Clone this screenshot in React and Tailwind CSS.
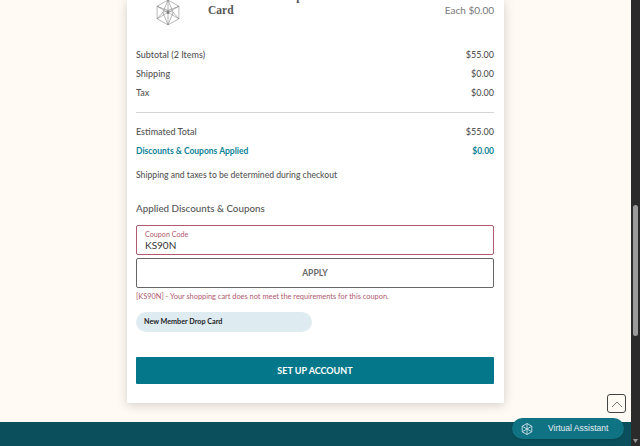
const Row = ({ label, value, className = 'text-[#555] font-medium text-[9px]' }) => (
  <div className={`flex justify-between items-center h-[19px] ${className}`}>
    <span>{label}</span>
    <span>{value}</span>
  </div>
);

const Logo = () => (
  <svg width="28" height="27" viewBox="0 0 26 26" fill="none" stroke="#777" strokeWidth="0.5">
    <path d="M13 1 L23.5 7 V19 L13 25 L2.5 19 V7 Z" />
    <path d="M13 1 V25 M2.5 7 L23.5 19 M23.5 7 L2.5 19" />
    <path d="M13 1 L18 13 L13 25 L8 13 Z" />
    <path d="M2.5 7 L18 13 L23.5 19 M23.5 7 L8 13 L2.5 19" />
    <circle cx="13" cy="13" r="1" fill="#666" />
  </svg>
);

const App = () => (
  <div className="flex w-[640px] h-[446px] overflow-hidden bg-[#fffaf4] font-[Lato,sans-serif]">
    <div className="flex flex-col flex-1 min-w-0">
      <div className="flex-1 min-h-0 flex justify-center">
        <div className="w-[377px] h-[403px] bg-white shadow-[0_2px_10px_rgba(0,0,0,0.18)] pl-[9px] pr-[10px] flex flex-col">
          <div className="flex justify-between items-start h-[45px]">
            <div className="flex gap-[26px]">
              <div className="pl-[18px] -mt-[1px] shrink-0"><Logo /></div>
              <span className="w-[110px] -mt-[11px] text-[11.5px] leading-[14px] font-bold text-[#555] font-['Liberation_Serif',serif]">New Member Drop Card</span>
            </div>
            <span className="text-[10px] text-[#777] mt-[3px]">Each $0.00</span>
          </div>
          <Row label="Subtotal (2 Items)" value="$55.00" />
          <Row label="Shipping" value="$0.00" />
          <Row label="Tax" value="$0.00" />
          <div className="h-px bg-[#d4d4d4] mt-[10px] mb-[9px]" />
          <Row label="Estimated Total" value="$55.00" />
          <Row label="Discounts & Coupons Applied" value="$0.00" className="mt-[1px] text-[#0a8296] font-bold text-[8.5px]" />
          <p className="text-[8.6px] font-medium text-[#555] mt-[8px]">Shipping and taxes to be determined during checkout</p>
          <h3 className="text-[9.8px] font-medium text-[#555] mt-[19px]">Applied Discounts & Coupons</h3>
          <div className="mt-[9.5px] h-[30px] border border-[#b0596f] rounded-[2px] px-[8px] flex flex-col justify-center">
            <span className="text-[7.2px] leading-[9px] text-[#b0596f]">Coupon Code</span>
            <span className="text-[10px] leading-[12px] text-[#333]">KS90N</span>
          </div>
          <button className="mt-[3px] h-[30px] border border-[#666] rounded-[2px] text-[8.5px] font-bold text-[#666]">APPLY</button>
          <p className="text-[7.4px] text-[#b0596f] mt-[2.5px]">[KS90N] - Your shopping cart does not meet the requirements for this coupon.</p>
          <div className="mt-[10.5px] w-[176px] h-[20px] rounded-full bg-[#deecf2] px-[8px] flex items-center text-[7.2px] font-bold text-[#222]">New Member Drop Card</div>
          <button className="mt-[25px] h-[27px] rounded-[1px] bg-[#04788a] text-white text-[9px] font-bold">SET UP ACCOUNT</button>
        </div>
      </div>
      <div className="h-[24px] bg-[#0b4f5c] shrink-0" />
    </div>
    <div className="w-[9px] bg-[#2b2b2b] shrink-0 flex flex-col items-center relative">
      <div className="w-[5px] h-[131px] mt-[205px] bg-[#9b9b9b] rounded-full" />
      <svg className="absolute bottom-[3px] left-[2px]" width="5" height="4" viewBox="0 0 5 4"><path d="M0 0H5L2.5 4Z" fill="#999" /></svg>
    </div>
    <button className="absolute left-[607px] top-[394px] w-[19px] h-[19px] border-[1.5px] border-[#444] rounded-[3px] bg-[#fffaf4] flex items-center justify-center">
      <svg width="12" height="8" viewBox="0 0 12 8" fill="none" stroke="#777" strokeWidth="1"><path d="M1 7L6 2L11 7" /></svg>
    </button>
    <div className="absolute left-[512px] top-[418px] w-[112px] h-[21px] rounded-full bg-[#0f7384] flex items-center pl-[9px] shadow-sm">
      <svg width="12" height="12" viewBox="0 0 12 12" fill="none" stroke="#c9dfe5" strokeWidth="0.9">
        <path d="M6 0.5L10.8 3.2V8.8L6 11.5L1.2 8.8V3.2Z M6 0.5V11.5 M1.2 3.2L10.8 8.8 M10.8 3.2L1.2 8.8" />
      </svg>
      <span className="ml-[15px] text-[8.5px] text-[#e3eef1] font-['Liberation_Sans',sans-serif]">Virtual Assistant</span>
    </div>
  </div>
);

export default App;
